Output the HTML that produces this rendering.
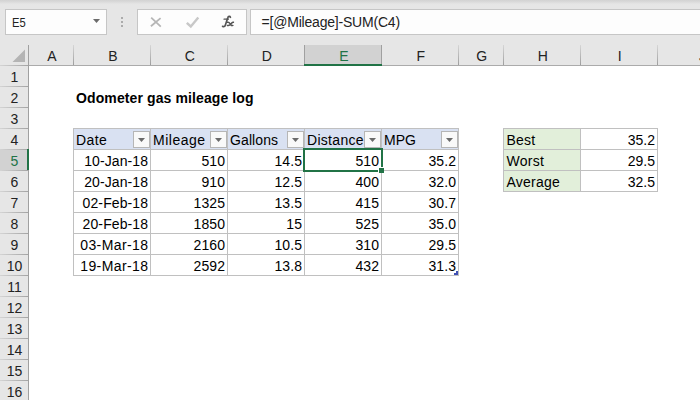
<!DOCTYPE html>
<html><head><meta charset="utf-8"><style>
html,body{margin:0;padding:0;}
body{width:700px;height:400px;overflow:hidden;position:relative;background:#fff;font-family:"Liberation Sans",sans-serif;}
.r{position:absolute;}
.t{position:absolute;white-space:pre;font-family:"Liberation Sans",sans-serif;}
</style></head><body>
<div class="r" style="left:0px;top:0px;width:700px;height:45px;background:#e6e6e6;"></div>
<div class="r" style="left:0px;top:0px;width:700px;height:5px;background:linear-gradient(#d3d3d3,#d6d6d6 1px,#e5e5e5 4px,#e6e6e6);"></div>
<div class="r" style="left:5px;top:9px;width:102px;height:26px;background:#fdfdfd;box-sizing:border-box;border:1px solid #c6c6c6;"></div>
<div class="t" style="top:12.50px;line-height:20px;font-size:13px;color:#222;left:11.6px;transform:scaleX(0.86);transform-origin:0 0;">E5</div>
<svg class="r" style="left:93px;top:19px" width="7" height="4"><path d="M0 0H7L3.5 4Z" fill="#6b6b6b"/></svg>
<div class="r" style="left:121px;top:17px;width:2px;height:2px;background:#ababab;"></div>
<div class="r" style="left:121px;top:21px;width:2px;height:2px;background:#ababab;"></div>
<div class="r" style="left:121px;top:25px;width:2px;height:2px;background:#ababab;"></div>
<div class="r" style="left:137px;top:9px;width:110px;height:26px;background:#fdfdfd;box-sizing:border-box;border:1px solid #c6c6c6;"></div>
<svg class="r" style="left:146px;top:12px" width="20" height="20"><path d="M5.2 5.7L14.8 14.6M14.6 6.1L4.9 14.2" stroke="#b6b6b6" stroke-width="1.8" fill="none"/></svg>
<svg class="r" style="left:182px;top:12px" width="20" height="20"><path d="M4.8 10.8L8.8 14.5L16.3 5.5" stroke="#c8c8c8" stroke-width="2.4" fill="none"/></svg>
<svg class="r" style="left:218px;top:12px" width="20" height="20"><g fill="none" stroke="#555" stroke-linecap="round"><path d="M12.4 5.3C12 4.1 10.3 3.9 9.7 5.9L7.3 13.3C6.9 14.6 5.6 15 4.6 14.3" stroke-width="1.7"/><path d="M6 7.2H10.4" stroke-width="1.2"/><path d="M9.5 10.3C10.8 9.9 11.4 10.6 12.2 11.8L13 13C13.4 13.6 14 13.7 14.9 13.4M15.4 10.3C14.8 10.1 14.2 10.6 13.4 11.4L11.4 13.2C11 13.5 10.4 13.6 9.4 13.4" stroke-width="1.5"/></g></svg>
<div class="r" style="left:250px;top:9px;width:460px;height:26px;background:#fdfdfd;box-sizing:border-box;border:1px solid #c6c6c6;"></div>
<div class="t" style="top:12.15px;line-height:20px;font-size:14px;color:#222;letter-spacing:-0.2px;left:261.5px;">=[@Mileage]-SUM(C4)</div>
<div class="r" style="left:0px;top:45px;width:700px;height:20px;background:#e6e6e6;"></div>
<svg class="r" style="left:12px;top:49px" width="14" height="14"><path d="M13 0.5V13H0.5Z" fill="#b4b4b4"/></svg>
<div class="r" style="left:304px;top:45px;width:77px;height:20px;background:#d2d2d2;"></div>
<div class="r" style="left:28px;top:45px;width:1px;height:20px;background:#a0a0a0;"></div>
<div class="r" style="left:73px;top:45px;width:1px;height:20px;background:linear-gradient(#d6d6d6,#9e9e9e);"></div>
<div class="r" style="left:150px;top:45px;width:1px;height:20px;background:linear-gradient(#d6d6d6,#9e9e9e);"></div>
<div class="r" style="left:227px;top:45px;width:1px;height:20px;background:linear-gradient(#d6d6d6,#9e9e9e);"></div>
<div class="r" style="left:304px;top:45px;width:1px;height:20px;background:linear-gradient(#d6d6d6,#9e9e9e);"></div>
<div class="r" style="left:381px;top:45px;width:1px;height:20px;background:linear-gradient(#d6d6d6,#9e9e9e);"></div>
<div class="r" style="left:458px;top:45px;width:1px;height:20px;background:linear-gradient(#d6d6d6,#9e9e9e);"></div>
<div class="r" style="left:503px;top:45px;width:1px;height:20px;background:linear-gradient(#d6d6d6,#9e9e9e);"></div>
<div class="r" style="left:580px;top:45px;width:1px;height:20px;background:linear-gradient(#d6d6d6,#9e9e9e);"></div>
<div class="r" style="left:657px;top:45px;width:1px;height:20px;background:linear-gradient(#d6d6d6,#9e9e9e);"></div>
<div class="r" style="left:734px;top:45px;width:1px;height:20px;background:linear-gradient(#d6d6d6,#9e9e9e);"></div>
<div class="r" style="left:304px;top:45px;width:1px;height:20px;background:#a0a0a0;"></div>
<div class="r" style="left:381px;top:45px;width:1px;height:20px;background:#a0a0a0;"></div>
<div class="r" style="left:0px;top:65px;width:700px;height:1px;background:#ababab;"></div>
<div class="r" style="left:304px;top:64px;width:78px;height:2px;background:#217346;"></div>
<div class="t" style="top:46.15px;line-height:20px;font-size:14px;color:#222;left:-48.2px;width:200px;text-align:center;">A</div>
<div class="t" style="top:46.15px;line-height:20px;font-size:14px;color:#222;left:12.799999999999997px;width:200px;text-align:center;">B</div>
<div class="t" style="top:46.15px;line-height:20px;font-size:14px;color:#222;left:89.80000000000001px;width:200px;text-align:center;">C</div>
<div class="t" style="top:46.15px;line-height:20px;font-size:14px;color:#222;left:166.8px;width:200px;text-align:center;">D</div>
<div class="t" style="top:46.15px;line-height:20px;font-size:14px;color:#217346;left:243.8px;width:200px;text-align:center;">E</div>
<div class="t" style="top:46.15px;line-height:20px;font-size:14px;color:#222;left:320.8px;width:200px;text-align:center;">F</div>
<div class="t" style="top:46.15px;line-height:20px;font-size:14px;color:#222;left:381.8px;width:200px;text-align:center;">G</div>
<div class="t" style="top:46.15px;line-height:20px;font-size:14px;color:#222;left:442.79999999999995px;width:200px;text-align:center;">H</div>
<div class="t" style="top:46.15px;line-height:20px;font-size:14px;color:#222;left:519.8px;width:200px;text-align:center;">I</div>
<div class="t" style="top:46.15px;line-height:20px;font-size:14px;color:#222;left:602.5px;width:200px;text-align:center;">J</div>
<div class="r" style="left:0px;top:66px;width:28px;height:400px;background:#e6e6e6;"></div>
<div class="r" style="left:0px;top:150px;width:28px;height:20px;background:#d2d2d2;"></div>
<div class="r" style="left:0px;top:65px;width:28px;height:1px;background:linear-gradient(90deg,#d4d4d4,#a4a4a4);"></div>
<div class="r" style="left:0px;top:86px;width:28px;height:1px;background:linear-gradient(90deg,#d4d4d4,#a4a4a4);"></div>
<div class="r" style="left:0px;top:107px;width:28px;height:1px;background:linear-gradient(90deg,#d4d4d4,#a4a4a4);"></div>
<div class="r" style="left:0px;top:128px;width:28px;height:1px;background:linear-gradient(90deg,#d4d4d4,#a4a4a4);"></div>
<div class="r" style="left:0px;top:149px;width:28px;height:1px;background:linear-gradient(90deg,#d4d4d4,#a4a4a4);"></div>
<div class="r" style="left:0px;top:170px;width:28px;height:1px;background:linear-gradient(90deg,#d4d4d4,#a4a4a4);"></div>
<div class="r" style="left:0px;top:191px;width:28px;height:1px;background:linear-gradient(90deg,#d4d4d4,#a4a4a4);"></div>
<div class="r" style="left:0px;top:212px;width:28px;height:1px;background:linear-gradient(90deg,#d4d4d4,#a4a4a4);"></div>
<div class="r" style="left:0px;top:233px;width:28px;height:1px;background:linear-gradient(90deg,#d4d4d4,#a4a4a4);"></div>
<div class="r" style="left:0px;top:254px;width:28px;height:1px;background:linear-gradient(90deg,#d4d4d4,#a4a4a4);"></div>
<div class="r" style="left:0px;top:275px;width:28px;height:1px;background:linear-gradient(90deg,#d4d4d4,#a4a4a4);"></div>
<div class="r" style="left:0px;top:296px;width:28px;height:1px;background:linear-gradient(90deg,#d4d4d4,#a4a4a4);"></div>
<div class="r" style="left:0px;top:317px;width:28px;height:1px;background:linear-gradient(90deg,#d4d4d4,#a4a4a4);"></div>
<div class="r" style="left:0px;top:338px;width:28px;height:1px;background:linear-gradient(90deg,#d4d4d4,#a4a4a4);"></div>
<div class="r" style="left:0px;top:359px;width:28px;height:1px;background:linear-gradient(90deg,#d4d4d4,#a4a4a4);"></div>
<div class="r" style="left:0px;top:380px;width:28px;height:1px;background:linear-gradient(90deg,#d4d4d4,#a4a4a4);"></div>
<div class="r" style="left:0px;top:401px;width:28px;height:1px;background:linear-gradient(90deg,#d4d4d4,#a4a4a4);"></div>
<div class="r" style="left:28px;top:45px;width:1px;height:400px;background:#a0a0a0;"></div>
<div class="r" style="left:27px;top:149px;width:2px;height:21px;background:#217346;"></div>
<div class="t" style="top:67.15px;line-height:20px;font-size:14px;color:#222;left:-85.5px;width:200px;text-align:center;">1</div>
<div class="t" style="top:88.15px;line-height:20px;font-size:14px;color:#222;left:-85.5px;width:200px;text-align:center;">2</div>
<div class="t" style="top:109.15px;line-height:20px;font-size:14px;color:#222;left:-85.5px;width:200px;text-align:center;">3</div>
<div class="t" style="top:130.15px;line-height:20px;font-size:14px;color:#222;left:-85.5px;width:200px;text-align:center;">4</div>
<div class="t" style="top:151.15px;line-height:20px;font-size:14px;color:#217346;left:-85.5px;width:200px;text-align:center;">5</div>
<div class="t" style="top:172.15px;line-height:20px;font-size:14px;color:#222;left:-85.5px;width:200px;text-align:center;">6</div>
<div class="t" style="top:193.15px;line-height:20px;font-size:14px;color:#222;left:-85.5px;width:200px;text-align:center;">7</div>
<div class="t" style="top:214.15px;line-height:20px;font-size:14px;color:#222;left:-85.5px;width:200px;text-align:center;">8</div>
<div class="t" style="top:235.15px;line-height:20px;font-size:14px;color:#222;left:-85.5px;width:200px;text-align:center;">9</div>
<div class="t" style="top:256.15px;line-height:20px;font-size:14px;color:#222;left:-85.5px;width:200px;text-align:center;">10</div>
<div class="t" style="top:277.15px;line-height:20px;font-size:14px;color:#222;left:-85.5px;width:200px;text-align:center;">11</div>
<div class="t" style="top:298.15px;line-height:20px;font-size:14px;color:#222;left:-85.5px;width:200px;text-align:center;">12</div>
<div class="t" style="top:319.15px;line-height:20px;font-size:14px;color:#222;left:-85.5px;width:200px;text-align:center;">13</div>
<div class="t" style="top:340.15px;line-height:20px;font-size:14px;color:#222;left:-85.5px;width:200px;text-align:center;">14</div>
<div class="t" style="top:361.15px;line-height:20px;font-size:14px;color:#222;left:-85.5px;width:200px;text-align:center;">15</div>
<div class="t" style="top:382.15px;line-height:20px;font-size:14px;color:#222;left:-85.5px;width:200px;text-align:center;">16</div>
<div class="r" style="left:29px;top:66px;width:700px;height:400px;background:#fff;"></div>
<div class="t" style="top:88.15px;line-height:20px;font-size:14px;color:#000;font-weight:bold;letter-spacing:0.11px;left:76px;">Odometer gas mileage log</div>
<div class="r" style="left:73px;top:128px;width:385px;height:21px;background:#d9e1f2;"></div>
<div class="r" style="left:73px;top:128px;width:386px;height:1px;background:#c0c0c0;"></div>
<div class="r" style="left:73px;top:149px;width:386px;height:1px;background:#c0c0c0;"></div>
<div class="r" style="left:73px;top:170px;width:386px;height:1px;background:#c0c0c0;"></div>
<div class="r" style="left:73px;top:191px;width:386px;height:1px;background:#c0c0c0;"></div>
<div class="r" style="left:73px;top:212px;width:386px;height:1px;background:#c0c0c0;"></div>
<div class="r" style="left:73px;top:233px;width:386px;height:1px;background:#c0c0c0;"></div>
<div class="r" style="left:73px;top:254px;width:386px;height:1px;background:#c0c0c0;"></div>
<div class="r" style="left:73px;top:275px;width:386px;height:1px;background:#c0c0c0;"></div>
<div class="r" style="left:73px;top:128px;width:1px;height:148px;background:#c0c0c0;"></div>
<div class="r" style="left:150px;top:128px;width:1px;height:148px;background:#c0c0c0;"></div>
<div class="r" style="left:227px;top:128px;width:1px;height:148px;background:#c0c0c0;"></div>
<div class="r" style="left:304px;top:128px;width:1px;height:148px;background:#c0c0c0;"></div>
<div class="r" style="left:381px;top:128px;width:1px;height:148px;background:#c0c0c0;"></div>
<div class="r" style="left:458px;top:128px;width:1px;height:148px;background:#c0c0c0;"></div>
<div class="t" style="top:130.15px;line-height:20px;font-size:14px;color:#000;letter-spacing:0.4px;left:76px;width:57px;overflow:hidden;white-space:nowrap;">Date</div>
<div class="r" style="left:133px;top:131px;width:17px;height:17px;background:#f9f9f9;box-sizing:border-box;border:1px solid #b6b6b6;"></div>
<svg class="r" style="left:138px;top:138px" width="7" height="4"><path d="M0 0H7L3.5 4Z" fill="#6b6b6b"/></svg>
<div class="t" style="top:130.15px;line-height:20px;font-size:14px;color:#000;letter-spacing:0.5px;left:153px;width:57px;overflow:hidden;white-space:nowrap;">Mileage</div>
<div class="r" style="left:210px;top:131px;width:17px;height:17px;background:#f9f9f9;box-sizing:border-box;border:1px solid #b6b6b6;"></div>
<svg class="r" style="left:215px;top:138px" width="7" height="4"><path d="M0 0H7L3.5 4Z" fill="#6b6b6b"/></svg>
<div class="t" style="top:130.15px;line-height:20px;font-size:14px;color:#000;letter-spacing:0.1px;left:230px;width:57px;overflow:hidden;white-space:nowrap;">Gallons</div>
<div class="r" style="left:287px;top:131px;width:17px;height:17px;background:#f9f9f9;box-sizing:border-box;border:1px solid #b6b6b6;"></div>
<svg class="r" style="left:292px;top:138px" width="7" height="4"><path d="M0 0H7L3.5 4Z" fill="#6b6b6b"/></svg>
<div class="t" style="top:130.15px;line-height:20px;font-size:14px;color:#000;letter-spacing:0.3px;left:307px;width:57px;overflow:hidden;white-space:nowrap;">Distance</div>
<div class="r" style="left:364px;top:131px;width:17px;height:17px;background:#f9f9f9;box-sizing:border-box;border:1px solid #b6b6b6;"></div>
<svg class="r" style="left:369px;top:138px" width="7" height="4"><path d="M0 0H7L3.5 4Z" fill="#6b6b6b"/></svg>
<div class="t" style="top:130.15px;line-height:20px;font-size:14px;color:#000;left:384px;width:57px;overflow:hidden;white-space:nowrap;">MPG</div>
<div class="r" style="left:441px;top:131px;width:17px;height:17px;background:#f9f9f9;box-sizing:border-box;border:1px solid #b6b6b6;"></div>
<svg class="r" style="left:446px;top:138px" width="7" height="4"><path d="M0 0H7L3.5 4Z" fill="#6b6b6b"/></svg>
<div class="t" style="top:151.15px;line-height:20px;font-size:14px;color:#000;letter-spacing:0.1px;left:78.1px;width:70px;text-align:right;">10-Jan-18</div>
<div class="t" style="top:151.15px;line-height:20px;font-size:14px;color:#000;letter-spacing:0.1px;left:155.1px;width:70px;text-align:right;">510</div>
<div class="t" style="top:151.15px;line-height:20px;font-size:14px;color:#000;letter-spacing:0.1px;left:232.1px;width:70px;text-align:right;">14.5</div>
<div class="t" style="top:151.15px;line-height:20px;font-size:14px;color:#000;letter-spacing:0.1px;left:309.1px;width:70px;text-align:right;">510</div>
<div class="t" style="top:151.15px;line-height:20px;font-size:14px;color:#000;letter-spacing:0.1px;left:386.1px;width:70px;text-align:right;">35.2</div>
<div class="t" style="top:172.15px;line-height:20px;font-size:14px;color:#000;letter-spacing:0.1px;left:78.1px;width:70px;text-align:right;">20-Jan-18</div>
<div class="t" style="top:172.15px;line-height:20px;font-size:14px;color:#000;letter-spacing:0.1px;left:155.1px;width:70px;text-align:right;">910</div>
<div class="t" style="top:172.15px;line-height:20px;font-size:14px;color:#000;letter-spacing:0.1px;left:232.1px;width:70px;text-align:right;">12.5</div>
<div class="t" style="top:172.15px;line-height:20px;font-size:14px;color:#000;letter-spacing:0.1px;left:309.1px;width:70px;text-align:right;">400</div>
<div class="t" style="top:172.15px;line-height:20px;font-size:14px;color:#000;letter-spacing:0.1px;left:386.1px;width:70px;text-align:right;">32.0</div>
<div class="t" style="top:193.15px;line-height:20px;font-size:14px;color:#000;letter-spacing:0.1px;left:78.1px;width:70px;text-align:right;">02-Feb-18</div>
<div class="t" style="top:193.15px;line-height:20px;font-size:14px;color:#000;letter-spacing:0.1px;left:155.1px;width:70px;text-align:right;">1325</div>
<div class="t" style="top:193.15px;line-height:20px;font-size:14px;color:#000;letter-spacing:0.1px;left:232.1px;width:70px;text-align:right;">13.5</div>
<div class="t" style="top:193.15px;line-height:20px;font-size:14px;color:#000;letter-spacing:0.1px;left:309.1px;width:70px;text-align:right;">415</div>
<div class="t" style="top:193.15px;line-height:20px;font-size:14px;color:#000;letter-spacing:0.1px;left:386.1px;width:70px;text-align:right;">30.7</div>
<div class="t" style="top:214.15px;line-height:20px;font-size:14px;color:#000;letter-spacing:0.1px;left:78.1px;width:70px;text-align:right;">20-Feb-18</div>
<div class="t" style="top:214.15px;line-height:20px;font-size:14px;color:#000;letter-spacing:0.1px;left:155.1px;width:70px;text-align:right;">1850</div>
<div class="t" style="top:214.15px;line-height:20px;font-size:14px;color:#000;letter-spacing:0.1px;left:232.1px;width:70px;text-align:right;">15</div>
<div class="t" style="top:214.15px;line-height:20px;font-size:14px;color:#000;letter-spacing:0.1px;left:309.1px;width:70px;text-align:right;">525</div>
<div class="t" style="top:214.15px;line-height:20px;font-size:14px;color:#000;letter-spacing:0.1px;left:386.1px;width:70px;text-align:right;">35.0</div>
<div class="t" style="top:235.15px;line-height:20px;font-size:14px;color:#000;letter-spacing:0.4px;left:78.4px;width:70px;text-align:right;">03-Mar-18</div>
<div class="t" style="top:235.15px;line-height:20px;font-size:14px;color:#000;letter-spacing:0.1px;left:155.1px;width:70px;text-align:right;">2160</div>
<div class="t" style="top:235.15px;line-height:20px;font-size:14px;color:#000;letter-spacing:0.1px;left:232.1px;width:70px;text-align:right;">10.5</div>
<div class="t" style="top:235.15px;line-height:20px;font-size:14px;color:#000;letter-spacing:0.1px;left:309.1px;width:70px;text-align:right;">310</div>
<div class="t" style="top:235.15px;line-height:20px;font-size:14px;color:#000;letter-spacing:0.1px;left:386.1px;width:70px;text-align:right;">29.5</div>
<div class="t" style="top:256.15px;line-height:20px;font-size:14px;color:#000;letter-spacing:0.4px;left:78.4px;width:70px;text-align:right;">19-Mar-18</div>
<div class="t" style="top:256.15px;line-height:20px;font-size:14px;color:#000;letter-spacing:0.1px;left:155.1px;width:70px;text-align:right;">2592</div>
<div class="t" style="top:256.15px;line-height:20px;font-size:14px;color:#000;letter-spacing:0.1px;left:232.1px;width:70px;text-align:right;">13.8</div>
<div class="t" style="top:256.15px;line-height:20px;font-size:14px;color:#000;letter-spacing:0.1px;left:309.1px;width:70px;text-align:right;">432</div>
<div class="t" style="top:256.15px;line-height:20px;font-size:14px;color:#000;letter-spacing:0.1px;left:386.1px;width:70px;text-align:right;">31.3</div>
<div class="r" style="left:456px;top:271px;width:2px;height:2px;background:#4050b4;"></div>
<div class="r" style="left:454px;top:273px;width:4px;height:2px;background:#4050b4;"></div>
<div class="r" style="left:303px;top:148px;width:80px;height:24px;box-sizing:border-box;border:2px solid #217346;"></div>
<div class="r" style="left:378px;top:167px;width:6px;height:6px;background:#fff;"></div>
<div class="r" style="left:379px;top:168px;width:5px;height:5px;background:#217346;"></div>
<div class="r" style="left:503px;top:128px;width:77px;height:63px;background:#e2efda;"></div>
<div class="r" style="left:503px;top:128px;width:155px;height:1px;background:#c0c0c0;"></div>
<div class="r" style="left:503px;top:149px;width:155px;height:1px;background:#c0c0c0;"></div>
<div class="r" style="left:503px;top:170px;width:155px;height:1px;background:#c0c0c0;"></div>
<div class="r" style="left:503px;top:191px;width:155px;height:1px;background:#c0c0c0;"></div>
<div class="r" style="left:503px;top:128px;width:1px;height:64px;background:#c0c0c0;"></div>
<div class="r" style="left:580px;top:128px;width:1px;height:64px;background:#c0c0c0;"></div>
<div class="r" style="left:657px;top:128px;width:1px;height:64px;background:#c0c0c0;"></div>
<div class="t" style="top:130.15px;line-height:20px;font-size:14px;color:#000;letter-spacing:0.25px;left:506.5px;">Best</div>
<div class="t" style="top:130.15px;line-height:20px;font-size:14px;color:#000;left:585px;width:70px;text-align:right;">35.2</div>
<div class="t" style="top:151.15px;line-height:20px;font-size:14px;color:#000;letter-spacing:0.25px;left:506.5px;">Worst</div>
<div class="t" style="top:151.15px;line-height:20px;font-size:14px;color:#000;left:585px;width:70px;text-align:right;">29.5</div>
<div class="t" style="top:172.15px;line-height:20px;font-size:14px;color:#000;letter-spacing:0.25px;left:506.5px;">Average</div>
<div class="t" style="top:172.15px;line-height:20px;font-size:14px;color:#000;left:585px;width:70px;text-align:right;">32.5</div>
</body></html>
